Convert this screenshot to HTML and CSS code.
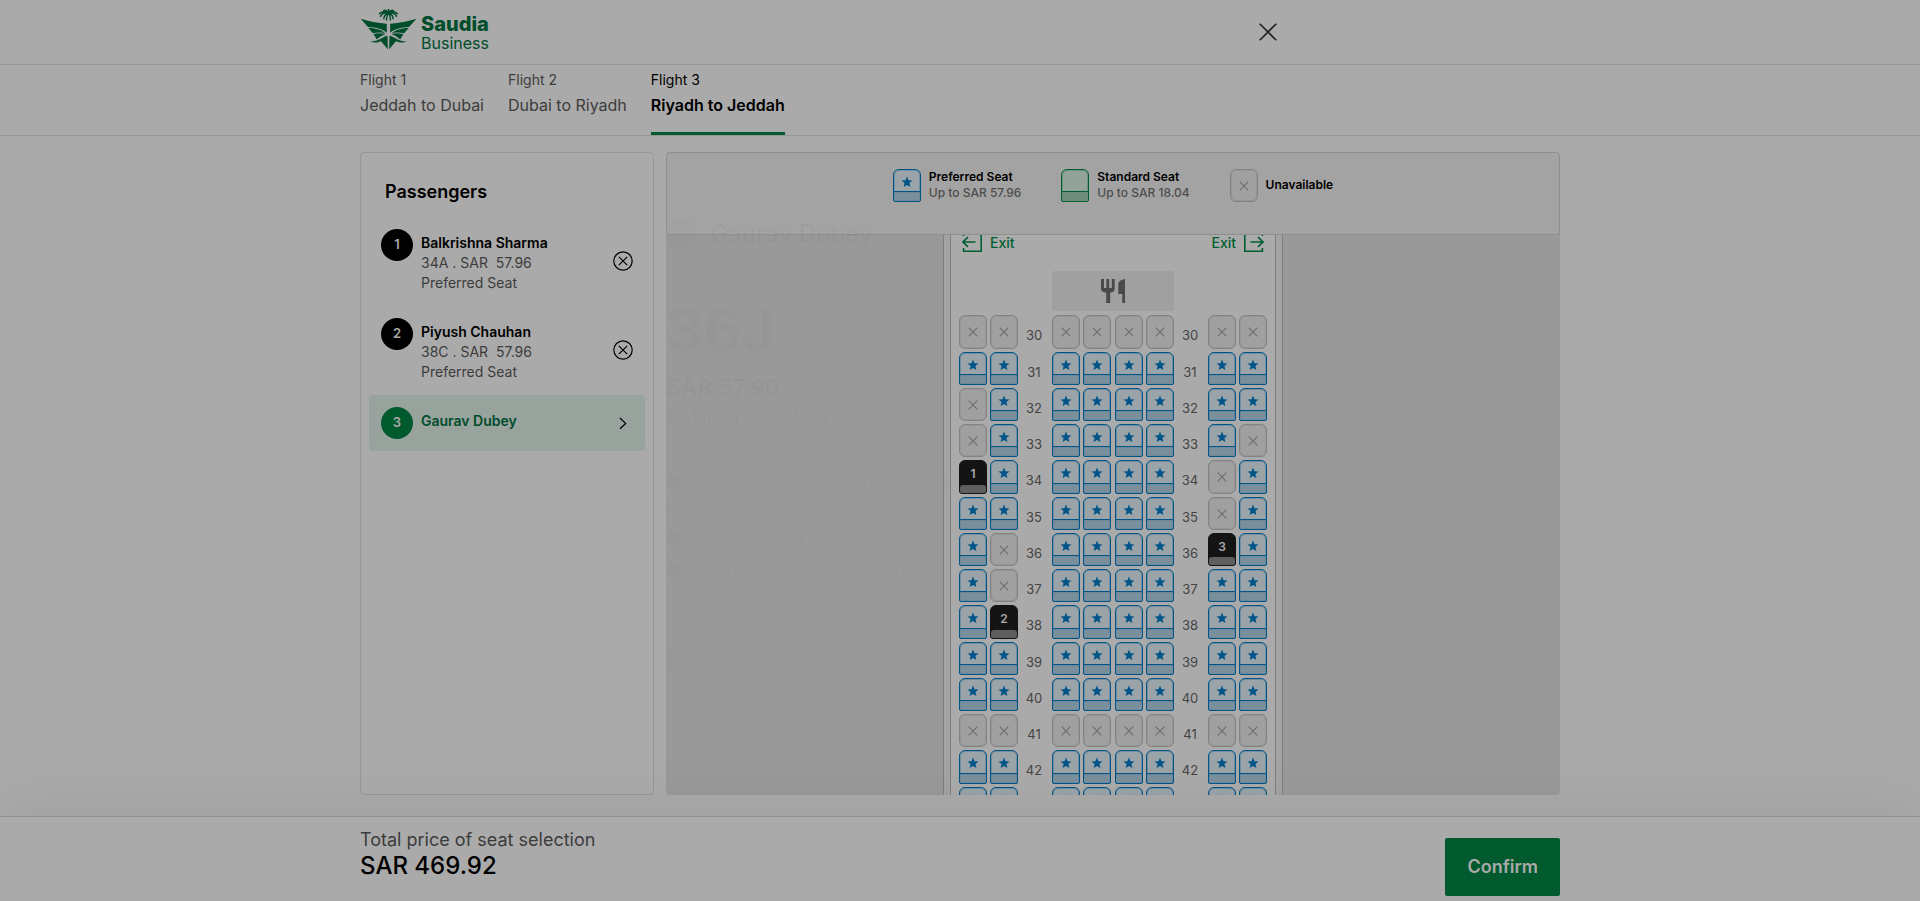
FILE: index.html
```html
<!DOCTYPE html>
<html lang="en">
<head>
<meta charset="utf-8">
<meta name="viewport" content="width=device-width, initial-scale=1">
<title>Seat selection</title>
<link rel="stylesheet" href="styles.css">
</head>
<body>
<svg class="sprite" aria-hidden="true">
  <symbol id="i-star" viewBox="0 0 12 12"><path d="M6 .4 7.5 4.2 11.5 4.5 8.4 7.1 9.4 11.1 6 8.9 2.6 11.1 3.6 7.1.5 4.5 4.5 4.2Z" fill="currentColor"/></symbol>
  <symbol id="i-cross" viewBox="0 0 10 10"><path d="M.7.7 9.3 9.3M9.3.7.7 9.3" fill="none" stroke="currentColor" stroke-width="1.2"/></symbol>
  <symbol id="i-remove" viewBox="0 0 20 20"><g fill="none" stroke="currentColor" stroke-width="1.2"><circle cx="10" cy="10" r="9.2"/><path d="M5.8 5.8 14.2 14.2M14.2 5.8 5.8 14.2"/></g></symbol>
  <symbol id="i-exit" viewBox="0 0 20 24"><g fill="none" stroke="currentColor" stroke-width="1.6"><path d="M1.6 8V1.8H19.2V23.2H1.6V20"/><path d="M13.5 14H1M6 9.2 1 14 6 18.8"/></g></symbol>
</svg>

<header class="topbar">
  <div class="wrap topbar-inner">
    <a class="logo" href="#" aria-label="Saudia Business">
      <svg class="logo-mark" viewBox="58 24 172 126" aria-hidden="true">
        <g id="wing" fill="#004d2b">
          <path d="M60 56C84 64 112 69 139 71V98C127 88 108 82 82 81Z"/>
          <path d="M83 84C104 83 123 90 136 101C126 97 112 96 97 100Z"/>
          <path d="M99 103C112 98 124 99 135 103C127 105 118 110 109 119Z"/>
          <path d="M88 125C107 125 123 117 139 106C131 121 111 134 88 125Z"/>
          <path d="M117 119 141 107 142 148Z"/>
        </g>
        <use href="#wing" transform="matrix(-1 0 0 1 288 0)"/>
        <g fill="none" stroke="#004d2b" stroke-width="4.4" stroke-linecap="round">
          <path d="M144 38V28M144 37C138 29 134 29 130 31M144 37C150 29 154 29 158 31M144 38C132 33 123 35 117 41M144 38C156 33 165 35 171 41M144 39C132 36 124 41 120 49M144 39C156 36 164 41 168 49M144 40C136 40 131 48 130 56M144 40C152 40 157 48 158 56M143 40C139 47 138 53 138 60M145 40C149 47 150 53 150 60"/>
        </g>
      </svg>
      <span class="logo-text"><strong>Saudia</strong><span>Business</span></span>
    </a>
    <button class="icon-btn close" aria-label="Close"><svg viewBox="0 0 10 10"><path d="M.4.4 9.6 9.6M9.6.4.4 9.6" fill="none" stroke="currentColor" stroke-width=".9"/></svg></button>
  </div>
</header>

<nav class="tabs" aria-label="Flights">
  <div class="wrap tabs-inner">
    <a class="tab" href="#"><small>Flight 1</small><span>Jeddah to Dubai</span></a>
    <a class="tab" href="#"><small>Flight 2</small><span>Dubai to Riyadh</span></a>
    <a class="tab active" href="#" aria-current="page"><small>Flight 3</small><span>Riyadh to Jeddah</span></a>
  </div>
</nav>

<main class="wrap main">
  <section class="passengers">
    <h2>Passengers</h2>
    <ul class="pax-list">
      <li class="pax">
        <span class="badge">1</span>
        <div class="pax-info"><b>Balkrishna Sharma</b><span>34A . SAR &nbsp;57.96</span><span>Preferred Seat</span></div>
        <button class="icon-btn" aria-label="Remove seat 34A"><svg><use href="#i-remove"/></svg></button>
      </li>
      <li class="pax">
        <span class="badge">2</span>
        <div class="pax-info"><b>Piyush Chauhan</b><span>38C . SAR &nbsp;57.96</span><span>Preferred Seat</span></div>
        <button class="icon-btn" aria-label="Remove seat 38C"><svg><use href="#i-remove"/></svg></button>
      </li>
      <li class="pax current">
        <span class="badge">3</span>
        <div class="pax-info"><b>Gaurav Dubey</b></div>
        <button class="icon-btn" aria-label="Choose seat"><svg viewBox="0 0 20 20"><path d="M7 5 12.6 10.4 7 15.8" fill="none" stroke="currentColor" stroke-width="1.3"/></svg></button>
      </li>
    </ul>
  </section>

  <section class="map" aria-label="Seat map">
    <div class="legend">
      <div class="legend-item"><span class="seat preferred"><svg><use href="#i-star"/></svg></span><p><b>Preferred Seat</b><span>Up to SAR 57.96</span></p></div>
      <div class="legend-item"><span class="seat standard"></span><p><b>Standard Seat</b><span>Up to SAR 18.04</span></p></div>
      <div class="legend-item"><span class="seat unavailable"><svg><use href="#i-cross"/></svg></span><p><b>Unavailable</b></p></div>
    </div>
    <div class="viewport">
      <div class="fuselage">
        <div class="cabin">
          <div class="exits">
            <span><svg><use href="#i-exit"/></svg>Exit</span>
            <span class="right"><svg><use href="#i-exit"/></svg>Exit</span>
          </div>
          <div class="galley"><svg viewBox="0 0 24 24" aria-label="Galley"><path fill="currentColor" d="M0 0H3V9H5.4V0H8.2V9H10.8V0H13.7V9.5Q13.7 13.5 9.2 13.7V24H5.2V13.7Q0 13.5 0 9.5ZM24 0V24H21.3V15H17.3V5Q17.5 1 24 0Z"/></svg></div>
          <div class="rows" id="rows"></div>
        </div>
      </div>
    </div>
    <div class="ghost" aria-hidden="true">
      <div class="ghost-head"><i></i>Gaurav Dubey</div>
      <div class="ghost-seat">36J</div>
      <div class="ghost-price">SAR 57.96</div>
      <div class="ghost-type">Preferred Seat &nbsp; Aisle Seat</div>
      <ul>
        <li><i></i>Seats located in the front zone and<br>the exit</li>
        <li><i></i>Faster boarding and deboarding</li>
        <li><i></i>Ideal for passengers in a hurry to</li>
      </ul>
      <div class="ghost-note">By adding this seat, you agree to the</div>
    </div>
  </section>
</main>

<footer class="footer">
  <div class="wrap footer-inner">
    <div class="total"><span>Total price of seat selection</span><strong>SAR 469.92</strong></div>
    <button class="confirm">Confirm</button>
  </div>
</footer>
<script src="seats.js"></script>
</body>
</html>
```
FILE: styles.css
```css
* { box-sizing: border-box; }
html, body { height: 100%; }
body {
  margin: 0;
  display: flex;
  flex-direction: column;
  overflow: hidden;
  background: #aaa;
  color: #000;
  font: 14px/20px Inter, "Liberation Sans", sans-serif;
}
button { font: inherit; color: inherit; cursor: pointer; }
a { color: inherit; text-decoration: none; }
.sprite { display: none; }
.wrap { width: 100%; max-width: 1200px; margin: 0 auto; }

.topbar { height: 65px; border-bottom: 1px solid #979797; }
.topbar-inner { height: 64px; display: flex; justify-content: space-between; align-items: center; padding-right: 280px; }
.logo { display: flex; gap: 4px; align-items: center; color: #004d2b; padding-bottom: 6px; }
.logo-mark { width: 57px; height: 42px; }
.logo-text { display: flex; flex-direction: column; padding-top: 8px; font-size: 16px; line-height: 18px; }
.logo-text strong { font-size: 20px; line-height: 20px; font-weight: 800; }
.icon-btn { border: 0; background: none; padding: 0; width: 20px; height: 20px; flex: none; }
.icon-btn svg { display: block; width: 100%; height: 100%; }
.close { width: 24px; height: 24px; padding: 3px; color: #222; }

.tabs { border-bottom: 1px solid #979797; height: 71px; }
.tabs-inner { display: flex; gap: 24px; height: 70px; }
.tab { display: flex; flex-direction: column; padding-top: 4px; border-bottom: 3px solid transparent; color: #3c3c3c; font-size: 16px; line-height: 28px; white-space: nowrap; }
.tab small { font-size: 14px; line-height: 22px; }
.tab.active { color: #000; border-color: #005a2d; }
.tab.active span { font-weight: 600; }

.main { flex: 1; min-height: 0; display: flex; gap: 12px; padding: 16px 0 21px; }
.passengers { width: 294px; flex: none; border: 1px solid #979797; border-radius: 4px; padding: 27px 8px; }
.passengers h2 { margin: 0 16px 13px; font-size: 18px; line-height: 24px; font-weight: 600; }
.pax-list { list-style: none; margin: 0; padding: 0; display: flex; flex-direction: column; gap: 1px; }
.pax { display: flex; align-items: center; gap: 8px; padding: 12px; border-radius: 4px; }
.badge { width: 32px; height: 32px; flex: none; align-self: flex-start; border-radius: 50%; background: #000; color: #aaa; text-align: center; line-height: 30px; font-size: 13px; font-weight: 600; }
.pax-info { flex: 1; display: flex; flex-direction: column; padding-top: 4px; color: #3c3c3c; }
.pax-info b { font-weight: 600; color: #000; }
.pax.current { background: #99a39d; }
.pax.current .badge { background: #005a2d; }
.pax.current .pax-info { padding: 4px 0 8px; }
.pax.current b { color: #004d2b; }

.map { position: relative; flex: 1; min-width: 0; display: flex; flex-direction: column; background: #999; border-radius: 4px; overflow: hidden; }
.legend { display: flex; justify-content: center; align-items: flex-start; gap: 40px; height: 83px; padding-top: 16px; flex: none; background: #a3a3a3; border: 1px solid #8f8f8f; border-radius: 4px 4px 0 0; }
.legend-item { display: flex; align-items: center; gap: 8px; height: 33px; }
.legend-item p { margin: 0; padding-bottom: 2px; display: flex; flex-direction: column; font-size: 12px; line-height: 16px; font-weight: 500; color: #4d4d4d; }
.legend-item b { font-weight: 600; color: #000; }

.viewport { flex: 1; min-height: 0; overflow: hidden; display: flex; justify-content: center; }
.fuselage { width: 340px; height: 1200px; padding: 0 6px; background: #a3a3a3; border: solid #7d7d7d; border-width: 0 1px; }
.cabin { height: 100%; background: #aaa; border: solid #7d7d7d; border-width: 0 1px; padding: 0 8px; }
.exits { display: flex; justify-content: space-between; margin-top: -7px; padding: 0 3px; color: #005f30; font-weight: 500; line-height: 30px; }
.exits span { display: flex; gap: 8px; height: 25px; }
.exits svg { width: 20px; height: 24px; }
.exits .right { flex-direction: row-reverse; }
.exits .right svg { transform: scaleX(-1); }
.galley { width: 122px; height: 40px; margin: 18px auto 4px; display: flex; align-items: center; justify-content: center; background: #a0a0a0; border-radius: 3px; color: #4a4a4a; }
.galley svg { width: 24px; height: 24px; }

.row { display: flex; justify-content: space-between; height: 36px; padding-bottom: 3px; }
.row:nth-child(4n + 1) { height: 37px; }
.group { display: flex; gap: 3px; }
.center { display: flex; gap: 4px; }
.row-no { color: #444; padding-top: 10px; width: 34px; margin: 0 -7px 0 -9px; text-align: center; font-size: 13px; }

.seat { position: relative; display: block; flex: none; width: 28px; min-height: 33px; padding: 0; border: 1px solid; border-radius: 6px 6px 3px 3px; text-align: center; }
.seat svg { position: absolute; left: 7px; top: 6px; width: 12px; height: 12px; }
.seat::after { content: ""; position: absolute; left: -1px; right: -1px; bottom: -1px; height: 9px; border: 1px solid; border-radius: 2px; }
.preferred { background: #99a3a8; color: #005488; border-color: #005488; box-shadow: inset 0 0 0 1px rgba(0, 84, 136, .25); }
.preferred::after { background: #7a8f9c; border-color: #005488; box-shadow: inset 0 0 0 1px rgba(0, 84, 136, .1); }
.standard { background: #94a399; border-color: #005f30; box-shadow: inset 0 0 0 1px rgba(0, 95, 48, .25); }
.standard::after { background: #6f8d7b; border-color: #005f30; }
.unavailable { background: #a0a0a0; border-color: #838383; border-radius: 6px; color: #6e6e6e; box-shadow: inset 0 0 0 1px rgba(0, 0, 0, .06); }
.unavailable::after { display: none; }
.unavailable svg { left: 8px; top: 11px; width: 10px; height: 10px; }
.selected { background: #141414; border-color: #141414; color: #aaa; font-size: 12px; line-height: 26px; font-weight: 600; padding-bottom: 6px; }
.selected::after { left: 0; right: 0; bottom: 0; height: 8px; background: #5f5f5f; border: 0; border-radius: 3px 3px 2px 2px; }

/* Seat details panel, nearly faded out */
.ghost { position: absolute; left: 0; top: 66px; color: rgba(0, 0, 0, .03); font-weight: 500; pointer-events: none; white-space: nowrap; }
.ghost i { display: inline-block; border-radius: 50%; background: rgba(0, 0, 0, .006); }
.ghost-head { display: flex; align-items: center; gap: 12px; font-size: 24px; line-height: 32px; }
.ghost-head i { width: 32px; height: 32px; }
.ghost-seat { margin-top: 44px; font-size: 58px; line-height: 72px; font-weight: 700; color: rgba(0, 0, 0, .02); }
.ghost-price { margin-top: 6px; font-size: 23px; line-height: 32px; font-weight: 600; }
.ghost-type { font-size: 16px; line-height: 28px; }
.ghost ul { list-style: none; margin: 40px 0 66px; padding: 0; display: flex; flex-direction: column; gap: 8px; font-size: 16px; line-height: 24px; font-weight: 400; }
.ghost li i { width: 15px; height: 15px; margin-right: 4px; }
.ghost-note { font-size: 14px; font-weight: 400; }

.footer { position: relative; flex: none; border-top: 1px solid #8f8f8f; background: #aaa; box-shadow: 0 0 64px rgba(0, 0, 0, .08); padding: 11px 0 5px; }
.footer-inner { display: flex; justify-content: space-between; align-items: flex-end; height: 68px; }
.total { display: flex; flex-direction: column; align-self: flex-start; color: #3c3c3c; font-size: 18px; line-height: 24px; }
.total strong { color: #000; font-size: 24px; line-height: 28px; font-weight: 500; }
.confirm { height: 58px; padding: 0 22px; border: 0; border-radius: 2px; background: #005a2d; color: #aaa; font-size: 18px; font-weight: 600; }
```
FILE: seats.js
```js
// One character per seat: p = preferred, x = unavailable, digit = passenger number.
const plan = {
  30: "xx xxxx xx",
  31: "pp pppp pp",
  32: "xp pppp pp",
  33: "xp pppp px",
  34: "1p pppp xp",
  35: "pp pppp xp",
  36: "px pppp 3p",
  37: "px pppp pp",
  38: "p2 pppp pp",
  39: "pp pppp pp",
  40: "pp pppp pp",
  41: "xx xxxx xx",
  42: "pp pppp pp",
  43: "pp pppp pp"
};
const lastLabelled = 42;

function seat(code, label) {
  if (code === "p") return `<button class="seat preferred" aria-label="${label}"><svg><use href="#i-star"/></svg></button>`;
  if (code === "x") return `<button class="seat unavailable" disabled aria-label="${label}"><svg><use href="#i-cross"/></svg></button>`;
  return `<button class="seat selected" aria-pressed="true">${code}</button>`;
}

function group(codes, row, letters) {
  return `<div class="group">${[...codes].map((c, i) => seat(c, row + letters[i])).join("")}</div>`;
}

document.getElementById("rows").innerHTML = Object.entries(plan).map(([row, codes]) => {
  const [left, mid, right] = codes.split(" ");
  const no = `<span class="row-no">${row <= lastLabelled ? row : ""}</span>`;
  return `<div class="row">${group(left, row, "AC")}${no}<div class="center">${group(mid.slice(0, 2), row, "DE")}${group(mid.slice(2), row, "FG")}</div>${no}${group(right, row, "HJ")}</div>`;
}).join("");
```
